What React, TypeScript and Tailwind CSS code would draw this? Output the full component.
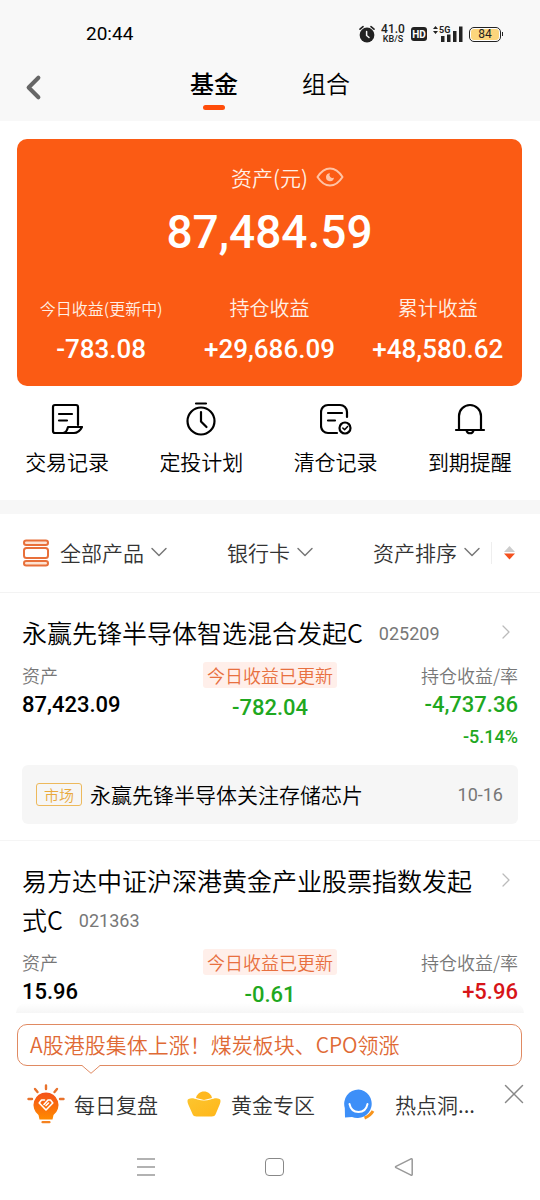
import { ChevronDown, ChevronLeft, ChevronRight, X } from 'lucide-react';
import type { ReactNode } from 'react';

type Fund = {
  name: string;
  code: string;
  asset: string;
  today: string;
  profit: string;
  rate?: string;
  news?: { tag: string; title: string; date: string };
};

const SUMMARY = [
  { label: '今日收益(更新中)', value: '-783.08', small: true },
  { label: '持仓收益', value: '+29,686.09', small: false },
  { label: '累计收益', value: '+48,580.62', small: false },
];

const FUNDS: Fund[] = [
  {
    name: '永赢先锋半导体智选混合发起C',
    code: '025209',
    asset: '87,423.09',
    today: '-782.04',
    profit: '-4,737.36',
    rate: '-5.14%',
    news: { tag: '市场', title: '永赢先锋半导体关注存储芯片', date: '10-16' },
  },
  {
    name: '易方达中证沪深港黄金产业股票指数发起式C',
    code: '021363',
    asset: '15.96',
    today: '-0.61',
    profit: '+5.96',
  },
];

const NUM = "font-['Roboto','Noto_Sans_CJK_SC',sans-serif]";

function trendColor(value: string) {
  return value.startsWith('-') ? 'text-[#1fa81f]' : 'text-[#d71418]';
}

function StatusBar() {
  return (
    <div className="flex h-[68px] items-center justify-between pl-[86px] pr-[37px]">
      <span className="font-['Roboto',sans-serif] text-[19px] font-normal text-black">20:44</span>
      <div className="flex items-center gap-[6px] text-[#222]">
        <svg width="16" height="18" viewBox="0 0 16 18" fill="none" aria-hidden>
          <circle cx="8" cy="10" r="7.4" fill="#222" />
          <path d="M1 4.2 4 1.6M15 4.2 12 1.6" stroke="#222" strokeWidth="1.6" strokeLinecap="round" />
          <path d="M7.6 6.5v4l2.4 2" stroke="#f8f8f8" strokeWidth="1.5" strokeLinecap="round" />
        </svg>
        <div className="flex w-6 flex-col items-center font-['Roboto',sans-serif] font-medium">
          <span className="text-[12px] leading-[11px]">41.0</span>
          <span className="text-[9px] leading-[9px]">KB/S</span>
        </div>
        <span className="flex h-[14px] w-4 items-center justify-center rounded-[3px] bg-[#222] font-['Roboto',sans-serif] text-[10px] font-bold text-white">
          HD
        </span>
        <svg width="30" height="18" viewBox="0 0 30 18" aria-hidden>
          <path d="M0 4 2.5 1 5 4zM0 6h5L2.5 9z" fill="#222" />
          <text x="6" y="8" fontSize="9" fontWeight="700" fontFamily="Roboto, sans-serif" fill="#222">
            5G
          </text>
          <path d="M8 11h3.5v6H8zM14 9.5h3.5V17H14zM20 6h3.5v11H20zM26 1.5h3.5V17H26z" fill="#222" />
        </svg>
        <span className="flex items-center gap-px">
          <span className="flex h-[15px] w-8 rounded-[5px] border border-[#222] bg-white p-px">
            <span className="flex flex-1 items-center justify-center rounded-[3px] bg-[#fcd57c] font-['Roboto',sans-serif] text-[12px] font-normal leading-none">
              84
            </span>
          </span>
          <span className="h-1 w-px bg-[#222]" />
        </span>
      </div>
    </div>
  );
}

function Header() {
  return (
    <header className="bg-[#f8f8f8]">
      <StatusBar />
      <div className="grid h-[53px] grid-cols-[60px_1fr_60px]">
        <button type="button" aria-label="返回" className="flex h-[38px] items-center pl-[14px]">
          <ChevronLeft size={39} strokeWidth={2.5} className="text-[#666]" />
        </button>
        <nav className="flex justify-center gap-16 text-[24px] leading-[30px] text-black">
          <button type="button" className="flex flex-col items-center font-medium">
            基金
            <span className="mt-[7px] h-[5px] w-[22px] rounded-full bg-[#ff4d0a]" />
          </button>
          <button type="button" className="flex flex-col items-center">
            组合
          </button>
        </nav>
      </div>
    </header>
  );
}

function AssetCard() {
  return (
    <section className="ml-[17px] mr-[18px] mt-[18px] rounded-[10px] bg-[#fb5b14] pb-[21px] pt-[22px] text-white">
      <div className="flex items-center justify-center gap-2 pl-9">
        <span className="text-[21px] leading-[32px] text-[#fff0e6]">资产(元)</span>
        <button type="button" aria-label="隐藏金额">
          <svg width="28" height="20" viewBox="0 0 28 20" fill="none">
            <path
              d="M1.5 10C5 4.5 9 1.5 14 1.5S23 4.5 26.5 10C23 15.5 19 18.5 14 18.5S5 15.5 1.5 10z"
              stroke="#ffc3a5"
              strokeWidth="2"
              strokeLinejoin="round"
            />
            <path d="M14 6.2a4 4 0 1 0 4 4.3 3 3 0 0 1-4-4.3z" fill="#ffc3a5" />
          </svg>
        </button>
      </div>
      <p className={`mt-[9px] text-center text-[46px] font-medium leading-[60px] ${NUM}`}>87,484.59</p>
      <dl className="mt-8 grid grid-cols-3 text-center">
        {SUMMARY.map((item) => (
          <div key={item.label}>
            <dt className={`leading-[28px] text-[#fff0e6] ${item.small ? 'text-[16px]' : 'text-[20px]'}`}>
              {item.label}
            </dt>
            <dd className={`mt-[11px] text-[26px] font-medium leading-[32px] ${NUM}`}>{item.value}</dd>
          </div>
        ))}
      </dl>
    </section>
  );
}

function Action({ label, children }: { label: string; children: ReactNode }) {
  return (
    <button type="button" className="flex flex-col items-center gap-[9px] text-[21px] leading-[32px] text-black">
      <svg
        width="32"
        height="34"
        viewBox="0 0 32 34"
        fill="none"
        stroke="currentColor"
        strokeWidth="2.2"
        strokeLinecap="round"
        strokeLinejoin="round"
        aria-hidden
      >
        {children}
      </svg>
      {label}
    </button>
  );
}

function Actions() {
  return (
    <section className="grid grid-cols-4 pb-[23px] pr-[3px] pt-4">
      <Action label="交易记录">
        <path d="M27 23V5a2 2 0 0 0-2-2H4a2 2 0 0 0-2 2v24a2 2 0 0 0 2 2h19c4 0 6-2 8-6H17c-1 4-2 6-5 6" />
        <path d="M8 12h13M8 18.5h8" />
      </Action>
      <Action label="定投计划">
        <circle cx="16" cy="19" r="13.5" />
        <path d="M11 1.5h10M16 10v9.500l5.500 5.500" />
      </Action>
      <Action label="清仓记录">
        <path d="M27 15V10a7 7 0 0 0-7-7H8a7 7 0 0 0-7 7v14a7 7 0 0 0 7 7h9" />
        <path d="M8 11h14M8 18.5h7" />
        <circle cx="25" cy="26" r="5.5" />
        <path d="m22.800 26 1.800 1.800 3-3.200" strokeWidth="1.5" />
      </Action>
      <Action label="到期提醒">
        <path d="M5 28V14a11 11 0 0 1 22 0v14M2 28h28" />
        <path d="M12.500 28.500a3.600 3.600 0 0 0 7 0" />
      </Action>
    </section>
  );
}

function Dropdown({ label, options }: { label: string; options: string[] }) {
  return (
    <div className="relative flex items-center pb-0.5">
      <select
        aria-label={label}
        className="field-sizing-content appearance-none bg-transparent pr-[22px] text-[21px] leading-[32px] text-[#333]"
      >
        {options.map((option) => (
          <option key={option}>{option}</option>
        ))}
      </select>
      <ChevronDown
        size={28}
        strokeWidth={1.25}
        className="pointer-events-none absolute -right-[7px] text-[#777]"
        aria-hidden
      />
    </div>
  );
}

function Filters() {
  return (
    <section className="flex h-[79px] items-center justify-between border-b border-[#f3f3f3] pl-[22px] pr-[25px]">
      <div className="flex items-center gap-[10px]">
        <svg width="28" height="28" viewBox="0 0 28 28" fill="#fff" stroke="#e8703a" strokeWidth="2" aria-hidden>
          <rect x="2" y="1.5" width="24" height="4.5" rx="2.2" fill="#fde3d3" />
          <rect x="2" y="9" width="24" height="10" rx="2.5" />
          <rect x="2" y="22" width="24" height="4.5" rx="2.2" fill="#fde3d3" />
        </svg>
        <Dropdown label="产品" options={['全部产品']} />
      </div>
      <Dropdown label="银行卡" options={['银行卡']} />
      <div className="flex items-center">
        <Dropdown label="排序方式" options={['资产排序']} />
        <span className="ml-3 h-[22px] w-px bg-[#eee]" />
        <button type="button" aria-label="切换升降序" className="ml-3">
          <svg width="11" height="14" viewBox="0 0 11 14">
            <path d="M0 6 5.5 0 11 6z" fill="#ccc" />
            <path d="M0 7.5h11L5.5 13.5z" fill="#f4511e" />
          </svg>
        </button>
      </div>
    </section>
  );
}

function FundItem({ fund }: { fund: Fund }) {
  return (
    <article className="border-b border-[#f5f5f5] px-[22px] pb-4 pt-5">
      <a href="#" className="flex items-start justify-between">
        <h2 className="text-[25px] leading-[39px] text-black">
          {fund.name}
          <span className={`ml-4 align-[3px] text-[18px] font-normal leading-none text-[#777] ${NUM}`}>
            {fund.code}
          </span>
        </h2>
        <ChevronRight size={24} strokeWidth={1.25} className="mt-[7px] shrink-0 text-[#bbb]" aria-hidden />
      </a>
      <div className="mt-[10px] grid grid-cols-3 text-[18px] leading-[26px]">
        <div>
          <p className="text-[#777]">资产</p>
          <p className={`text-[22px] font-medium leading-[34px] text-black ${NUM}`}>{fund.asset}</p>
        </div>
        <div className="flex flex-col items-center">
          <p className="rounded-[3px] bg-[#ffefea] px-1 text-[#e8703f]">今日收益已更新</p>
          <p className={`pt-1 text-[22px] font-medium leading-[32px] ${NUM} ${trendColor(fund.today)}`}>
            {fund.today}
          </p>
        </div>
        <div className={`text-right ${trendColor(fund.profit)}`}>
          <p className="text-[#777]">持仓收益/率</p>
          <p className={`text-[22px] font-medium leading-[34px] ${NUM}`}>{fund.profit}</p>
          {fund.rate && <p className={`font-medium leading-[30px] ${NUM}`}>{fund.rate}</p>}
        </div>
      </div>
      {fund.news && (
        <a href="#" className="mt-[13px] flex h-[59px] items-center rounded-[6px] bg-[#f6f6f6] pl-[14px] pr-[15px]">
          <span className="rounded-[3px] border border-[#edb95c] px-[7px] text-[15px] leading-[21px] text-[#e9a93c]">
            {fund.news.tag}
          </span>
          <span className="ml-2 text-[21px] text-black">{fund.news.title}</span>
          <span className={`ml-auto text-[18px] font-normal text-[#777] ${NUM}`}>{fund.news.date}</span>
        </a>
      )}
    </article>
  );
}

function BulbIcon() {
  return (
    <svg width="38" height="40" viewBox="0 0 38 40" fill="none" aria-hidden>
      <defs>
        <linearGradient id="bulb" x1="0" y1="0" x2="0" y2="1">
          <stop offset="0" stopColor="#f4511a" />
          <stop offset="1" stopColor="#ff8a00" />
        </linearGradient>
      </defs>
      <path
        d="M19 1.500V5M8 5l2.500 3M30 5l-2.500 3M1.500 15H5M33 15h3.500"
        stroke="#e8722c"
        strokeWidth="2.4"
        strokeLinecap="round"
      />
      <path d="M19 8.500a12.500 12.500 0 0 0-7.500 22.500l1 4.500h13l1-4.500A12.500 12.500 0 0 0 19 8.500z" fill="url(#bulb)" />
      <path
        d="M17.500 16h-3L12.200 19l6.800 7 6.800-7-2.300-3h-2.500l-4 4.500M19 21.500l2.500-2.500"
        stroke="#fff"
        strokeWidth="1.6"
        strokeLinecap="round"
        strokeLinejoin="round"
      />
      <path d="M15.500 38.200h7" stroke="#f58220" strokeWidth="2.2" strokeLinecap="round" />
    </svg>
  );
}

function IngotIcon() {
  return (
    <svg width="34" height="26" viewBox="0 0 34 26" aria-hidden>
      <defs>
        <linearGradient id="ingot" x1="0" y1="0" x2="1" y2="1">
          <stop offset="0" stopColor="#fcc52f" />
          <stop offset="1" stopColor="#ffb619" />
        </linearGradient>
      </defs>
      <path d="M9 7C10 3 13 .5 17 .5S24 3 25 7L17 9z" fill="#ffb81f" />
      <path
        d="M1.500 8c3-1.500 6-.5 9 .5 4.500 1.300 8.500 1.300 13 0 3-1 6-2 9-.5 1.500.8 1.200 3 .2 5.500l-4 9.500c-.8 1.800-2 2.500-4 2.500H9.500c-2 0-3.200-.7-4-2.500l-4.200-9.500C.3 11 0 8.800 1.500 8z"
        fill="url(#ingot)"
      />
    </svg>
  );
}

function ChatIcon() {
  return (
    <svg width="31" height="31" viewBox="0 0 31 31" fill="none" aria-hidden>
      <path d="M20.500 29c4-1.500 6.500-3.500 8.500-7" stroke="#f7941d" strokeWidth="3" />
      <path d="M14.500.5A14.300 14.300 0 0 0 .8 19L1 28.500l7-.5A14.300 14.300 0 1 0 14.500.5z" fill="#3d8ff8" />
      <path d="M5.500 15c1 5 4.500 8 9 8s8-3 9-8" stroke="#fff" strokeWidth="2" strokeLinecap="round" />
    </svg>
  );
}

function Dock() {
  return (
    <footer className="relative bg-white pt-[13px]">
      <div className="pointer-events-none absolute inset-x-4 -top-2 h-[10px] rounded-t-xl bg-gradient-to-b from-[#f6f6f6]/0 to-[#f6f6f6]" />
      <div className="relative ml-[17px] mr-[18px] rounded-[10px] border border-[#e08a62] bg-white pl-3">
        <a href="#" className="block pb-[2px] text-[21px] leading-[38px] text-[#df6a35]">
          A股港股集体上涨！煤炭板块、CPO领涨
        </a>
        <svg className="absolute left-16 top-full -mt-px" width="18" height="10" viewBox="0 0 18 10" aria-hidden>
          <path d="M0 1.500 9 9.500 18 1.500V0H0z" fill="#fff" />
          <path d="M0 1.500 9 9.300 18 1.500" fill="none" stroke="#e08a62" />
        </svg>
      </div>
      <div className="flex h-[58px] items-start justify-between pl-[27px] pr-[9px] pt-[18px]">
        <div className="flex gap-[29px] whitespace-nowrap text-[21px] leading-[40px] text-[#333]">
          <a href="#" className="flex items-center gap-[9px]">
            <BulbIcon />
            每日复盘
          </a>
          <a href="#" className="flex items-center gap-[10px]">
            <IngotIcon />
            黄金专区
          </a>
          <a href="#" className="flex items-center gap-5">
            <ChatIcon />
            热点洞...
          </a>
        </div>
        <button type="button" aria-label="关闭" className="-mt-[7px]">
          <X size={34} strokeWidth={1} className="text-[#888]" />
        </button>
      </div>
      <nav className="grid h-[76px] grid-cols-3 items-center justify-items-center pl-[81px] pr-[72px] pt-[10px] text-[#999]">
        <button type="button" aria-label="菜单">
          <svg width="20" height="20" viewBox="0 0 20 20" stroke="currentColor" strokeWidth="1.5">
            <path d="M1 2h18M1 10h18M1 18h18" />
          </svg>
        </button>
        <button type="button" aria-label="主屏幕" className="h-[18px] w-[19px] rounded-[4px] border border-[#888]" />
        <button type="button" aria-label="后退">
          <svg
            width="20"
            height="20"
            viewBox="0 0 20 20"
            fill="none"
            stroke="currentColor"
            strokeWidth="1.5"
            strokeLinejoin="round"
          >
            <path d="M2 9.300Q1 10 2 10.700L17 18.200Q18.200 18.600 18.200 17.500V2.500Q18.200 1.400 17 1.800z" />
          </svg>
        </button>
      </nav>
    </footer>
  );
}

export default function App() {
  return (
    <div className="flex h-screen flex-col bg-white font-['Noto_Sans_CJK_SC',sans-serif] font-[350]">
      <Header />
      <main className="min-h-0 flex-1 overflow-hidden">
        <AssetCard />
        <Actions />
        <div className="h-[14px] bg-[#f7f7f7]" />
        <Filters />
        {FUNDS.map((fund) => (
          <FundItem key={fund.code} fund={fund} />
        ))}
      </main>
      <Dock />
    </div>
  );
}
